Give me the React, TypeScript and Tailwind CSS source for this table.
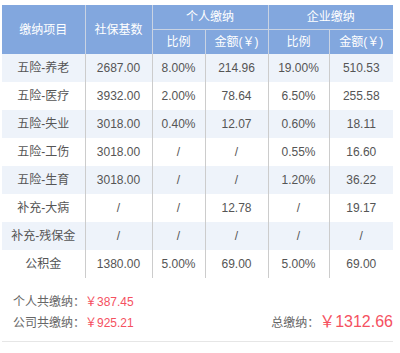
import React from "react";

const rows: [string, string, string, string, string, string][] = [
  ["五险-养老", "2687.00", "8.00%", "214.96", "19.00%", "510.53"],
  ["五险-医疗", "3932.00", "2.00%", "78.64", "6.50%", "255.58"],
  ["五险-失业", "3018.00", "0.40%", "12.07", "0.60%", "18.11"],
  ["五险-工伤", "3018.00", "/", "/", "0.55%", "16.60"],
  ["五险-生育", "3018.00", "/", "/", "1.20%", "36.22"],
  ["补充-大病", "/", "/", "12.78", "/", "19.17"],
  ["补充-残保金", "/", "/", "/", "/", "/"],
  ["公积金", "1380.00", "5.00%", "69.00", "5.00%", "69.00"],
];

const font = { fontFamily: '"Liberation Sans", "Noto Sans CJK SC", sans-serif' };

export default function App() {
  return (
    <div className="w-[400px] h-[353px] bg-white pt-[5px] pl-[2px]" style={font}>
      <div className="w-[391px]">
        <table className="w-[391px] table-fixed border-collapse text-[12px] text-center">
          <colgroup>
            <col className="w-[83px]" />
            <col className="w-[67px]" />
            <col className="w-[53px]" />
            <col className="w-[63px]" />
            <col className="w-[61px]" />
            <col className="w-[64px]" />
          </colgroup>
          <thead className="bg-[#82a7de] text-white">
            <tr className="h-[24px]">
              <th rowSpan={2} className="font-normal p-0">缴纳项目</th>
              <th rowSpan={2} className="font-normal p-0 border-l border-[#c9d3e3]">社保基数</th>
              <th colSpan={2} className="font-normal p-0 border-l border-b border-[#c9d3e3]">个人缴纳</th>
              <th colSpan={2} className="font-normal p-0 border-l border-b border-[#c9d3e3]">企业缴纳</th>
            </tr>
            <tr className="h-[25px]">
              <th className="font-normal p-0 border-l border-[#c9d3e3]">比例</th>
              <th className="font-normal p-0 border-l border-[#c9d3e3]">金额(￥)</th>
              <th className="font-normal p-0 border-l border-[#c9d3e3]">比例</th>
              <th className="font-normal p-0 border-l border-[#c9d3e3]">金额(￥)</th>
            </tr>
          </thead>
          <tbody className="text-[#555]">
            {rows.map((r, i) => (
              <tr key={i} className={"h-[28px] " + (i % 2 === 0 ? "bg-[#eef3fa]" : "bg-white")}>
                {r.map((c, j) => (
                  <td key={j} className={"p-0 " + (j > 0 ? "border-l border-[#cccccc]" : "")}>
                    {c}
                  </td>
                ))}
              </tr>
            ))}
          </tbody>
        </table>
        <div className="mt-[14px] pl-[11px] pb-[8px] border-b border-[#e6e6e6] flex items-end justify-between text-[12px]">
          <div className="flex flex-col gap-[1px]">
            <div className="h-[20px] leading-[20px] text-[#666]">
              个人共缴纳：<span className="text-[#f5515f]">￥387.45</span>
            </div>
            <div className="h-[20px] leading-[20px] text-[#666]">
              公司共缴纳：<span className="text-[#f5515f]">￥925.21</span>
            </div>
          </div>
          <div className="h-[22px] leading-[22px] text-[#666] whitespace-nowrap">
            总缴纳：<span className="text-[16px] text-[#f5515f]">￥1312.66</span>
          </div>
        </div>
      </div>
    </div>
  );
}
